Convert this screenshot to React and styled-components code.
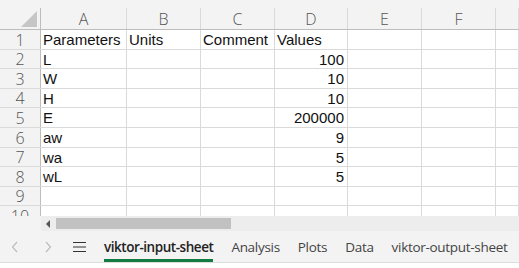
import React from "react";
import styled, { createGlobalStyle } from "styled-components";

const Global = createGlobalStyle`
  html, body {
    margin: 0;
    padding: 0;
    background: #ffffff;
    overflow: hidden;
  }
`;

const COLS = ["A", "B", "C", "D", "E", "F", ""];
const WIDTHS = "41px 86px 74px 74px 73px 74px 74px 1fr";
const ROW_H = [20, 19, 20, 19, 20, 20, 19, 20, 19, 20];

const ROWS = [
  ["Parameters", "Units", "Comment", "Values"],
  ["L", "", "", 100],
  ["W", "", "", 10],
  ["H", "", "", 10],
  ["E", "", "", 200000],
  ["aw", "", "", 9],
  ["wa", "", "", 5],
  ["wL", "", "", 5],
  ["", "", "", ""],
  ["", "", "", ""],
];

const Page = styled.div`
  width: 519px;
  height: 268px;
  display: flex;
  flex-direction: column;
  background: #ffffff;
`;

const Viewport = styled.div`
  height: 216px;
  flex-shrink: 0;
  overflow: hidden;
`;

const HeaderRow = styled.div`
  display: grid;
  grid-template-columns: ${WIDTHS};
  height: 30px;
  padding-top: 8px;
  box-sizing: border-box;
  background: #f3f3f3;
  border-bottom: 1px solid #bdbdbd;
`;

const Corner = styled.div`
  position: relative;
  border-right: 1px solid #bdbdbd;
  &::after {
    content: "";
    position: absolute;
    right: 3px;
    bottom: 2px;
    width: 0;
    height: 0;
    border-left: 16px solid transparent;
    border-bottom: 16px solid #c6c6c6;
  }
`;

const ColHead = styled.div`
  border-right: 1px solid #dadada;
  display: flex;
  align-items: center;
  justify-content: center;
  font-family: "Open Sans", "Noto Sans", sans-serif;
  font-weight: 300;
  font-size: 16px;
  line-height: 1;
  color: #555;
`;

const Row = styled.div`
  display: grid;
  grid-template-columns: ${WIDTHS};
  height: ${(p) => p.$h}px;
  box-sizing: border-box;
  border-bottom: 1px solid #dadada;
`;

const RowHead = styled.div`
  background: #f3f3f3;
  border-right: 1px solid #bdbdbd;
  display: flex;
  align-items: center;
  justify-content: center;
  font-family: "Open Sans", "Noto Sans", sans-serif;
  font-weight: 300;
  font-size: 16px;
  line-height: 1;
  color: #555;
`;

const Cell = styled.div`
  border-right: 1px solid #dadada;
  display: flex;
  align-items: center;
  justify-content: ${(p) => (p.$num ? "flex-end" : "flex-start")};
  padding: 0 3px 0 2px;
  font-family: "Liberation Sans", Arial, sans-serif;
  font-size: 15px;
  line-height: 1;
  color: #111;
  white-space: nowrap;
  box-sizing: border-box;
`;

const ScrollRow = styled.div`
  height: 15px;
  flex-shrink: 0;
  display: flex;
  background: #f3f3f3;
`;

const Track = styled.div`
  margin-left: 41px;
  flex: 1;
  background: #ededed;
  display: flex;
  align-items: center;
`;

const Arrow = styled.div`
  width: 0;
  height: 0;
  margin-left: 5px;
  border-top: 4px solid transparent;
  border-bottom: 4px solid transparent;
  border-right: 4px solid #555;
`;

const Thumb = styled.div`
  margin-left: 6px;
  width: 175px;
  height: 11px;
  background: #c1c1c1;
`;

const TabBar = styled.div`
  height: 32px;
  flex-shrink: 0;
  box-sizing: border-box;
  background: #f3f3f3;
  border-bottom: 1px solid #dcdcdc;
  display: flex;
  align-items: stretch;
  font-family: "Open Sans", "Noto Sans", sans-serif;
  font-size: 13.5px;
  color: #444;
  white-space: nowrap;
  overflow: hidden;
`;

const Nav = styled.div`
  width: ${(p) => p.$w}px;
  flex-shrink: 0;
  display: flex;
  align-items: center;
  justify-content: flex-start;
  padding-left: ${(p) => p.$pl}px;
  box-sizing: border-box;
  color: ${(p) => p.$c};
`;

const Tab = styled.div`
  margin-right: 18px;
  flex-shrink: 0;
  display: flex;
  align-items: center;
  padding-top: 1px;
  position: relative;
  font-weight: ${(p) => (p.$active ? 600 : 400)};
  color: ${(p) => (p.$active ? "#222" : "#444")};
  letter-spacing: ${(p) => (p.$active ? "-0.45px" : "-0.3px")};
  &::after {
    content: "";
    display: ${(p) => (p.$active ? "block" : "none")};
    position: absolute;
    left: 0;
    right: 0;
    bottom: 0;
    height: 3px;
    background: #107c41;
  }
`;

const Bottom = styled.div`
  flex: 1;
  background: #fff;
`;

export default function App() {
  return (
    <Page>
      <Global />
      <Viewport>
        <HeaderRow>
          <Corner />
          {COLS.map((c, i) => (
            <ColHead key={i}>{c}</ColHead>
          ))}
        </HeaderRow>
        {ROWS.map((r, i) => (
          <Row key={i} $h={ROW_H[i]}>
            <RowHead>{i + 1}</RowHead>
            {r.map((v, j) => (
              <Cell key={j} $num={typeof v === "number"}>
                {v}
              </Cell>
            ))}
            <Cell />
            <Cell />
            <Cell />
          </Row>
        ))}
      </Viewport>
      <ScrollRow>
        <Track>
          <Arrow />
          <Thumb />
        </Track>
      </ScrollRow>
      <TabBar>
        <Nav $w={40} $pl={11} $c="#bdbdbd">
          <svg width="8" height="12" viewBox="0 0 8 12">
            <path d="M6 1 L1.5 6 L6 11" fill="none" stroke="currentColor" strokeWidth="1.2" />
          </svg>
        </Nav>
        <Nav $w={32} $pl={4} $c="#bdbdbd">
          <svg width="8" height="12" viewBox="0 0 8 12">
            <path d="M2 1 L6.5 6 L2 11" fill="none" stroke="currentColor" strokeWidth="1.2" />
          </svg>
        </Nav>
        <Nav $w={32} $pl={1} $c="#333">
          <svg width="13" height="12" viewBox="0 0 13 12">
            <path d="M0 1.5 H13 M0 6 H13 M0 10.5 H13" stroke="currentColor" strokeWidth="1.2" />
          </svg>
        </Nav>
        <Tab $active>viktor-input-sheet</Tab>
        <Tab>Analysis</Tab>
        <Tab>Plots</Tab>
        <Tab>Data</Tab>
        <Tab>viktor-output-sheet</Tab>
      </TabBar>
      <Bottom />
    </Page>
  );
}
